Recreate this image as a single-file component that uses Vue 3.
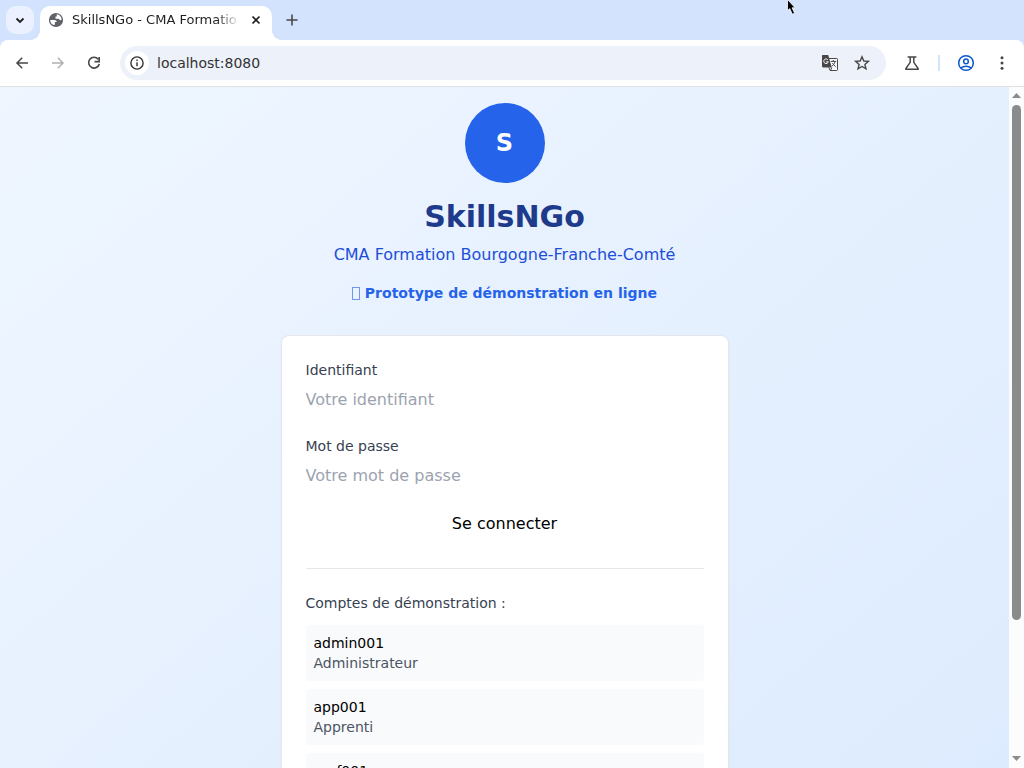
<script setup>
import { ref } from 'vue'

const username = ref('')
const password = ref('')
const accounts = [
  { id: 'admin001', role: 'Administrateur' },
  { id: 'app001', role: 'Apprenti' },
  { id: 'prof001', role: 'Formateur' },
]
</script>

<template>
  <div class="browser">
    <header class="tab-strip">
      <button class="tab-search" aria-label="Search tabs">
        <svg width="20" height="20" viewBox="0 0 20 20"><path d="M6.500 8.500 10 12l3.500-3.500" fill="none" stroke="#1f1f1f" stroke-width="1.800" /></svg>
      </button>
      <div class="tab">
        <svg class="favicon" width="16" height="16" viewBox="0 0 16 16">
          <circle cx="8" cy="8" r="7.100" fill="#5f6368" />
          <path d="M2.300 7.900h3.900c1.700 0 2.500.8 2.500 2.100H6.900v2.800c-.8.300-1.500.1-2.200-.3C2.900 11.400 2.100 9.700 2.300 7.900zM8.700 2.300C11.700 2.700 13.500 4.900 13.700 7.600c-.8.900-1.700.9-2.300 0-.4-.5-.7-.8-1.500-.8H7.500V4.600h1.400c0-.9-.3-1.500-.2-2.300z" fill="#fff" />
        </svg>
        <span class="tab-title">SkillsNGo - CMA Formatio</span>
        <button class="tab-close" aria-label="Close tab">
          <svg width="16" height="16" viewBox="0 0 16 16"><path d="m4.500 4.500 7 7m0-7-7 7" stroke="#1f1f1f" stroke-width="1.700" /></svg>
        </button>
      </div>
      <button class="new-tab" aria-label="New tab">
        <svg width="20" height="20" viewBox="0 0 20 20"><path d="M10 4.500v11M4.500 10h11" stroke="#474747" stroke-width="1.600" /></svg>
      </button>
      <svg class="cursor" width="12" height="18" viewBox="0 0 12 18"><path d="M.5-3v13.800l2.200-2.200 2.600 5.600 2.300-1-2.500-5.400h3L.5-.6z" fill="#000" stroke="#fff" stroke-width=".8" /></svg>
    </header>

    <nav class="toolbar">
      <button class="tool" aria-label="Back">
        <svg width="20" height="20" viewBox="0 0 20 20"><path d="M16 10H5.200M10.200 4.800 5 10l5.200 5.200" fill="none" stroke="#474747" stroke-width="1.500" /></svg>
      </button>
      <button class="tool" aria-label="Forward">
        <svg width="20" height="20" viewBox="0 0 20 20"><path d="M4 10h10.800M9.800 4.800 15 10l-5.200 5.200" fill="none" stroke="#b0b0b0" stroke-width="1.500" /></svg>
      </button>
      <button class="tool" aria-label="Reload">
        <svg width="20" height="20" viewBox="0 0 20 20"><path d="M14.200 6.200A5.400 5.400 0 1 0 15.300 11M15.200 4v4.600h-4.600" fill="none" stroke="#474747" stroke-width="1.600" /></svg>
      </button>
      <div class="omnibox">
        <button class="site-info" aria-label="View site information">
          <svg width="16" height="16" viewBox="0 0 16 16"><circle cx="8" cy="8" r="6.100" fill="none" stroke="#333" stroke-width="1.400" /><path d="M8 7.200v4M8 4.600V6" stroke="#333" stroke-width="1.400" /></svg>
        </button>
        <input class="url" type="text" value="localhost:8080" aria-label="Address" />
        <button class="inner-tool" aria-label="Translate this page">
          <svg width="18" height="18" viewBox="0 0 18 18">
            <path d="M7.500 4.500h8.200c.5 0 .8.300.8.800v10.400c0 .5-.3.800-.8.800H9.200l-1.400-3" fill="#f7f9fd" stroke="#474747" />
            <path d="M1.500 1h5.700l3.600 12.500H2.200c-.8 0-1.200-.5-1.200-1.200V1.700C1 1.200 1.200 1 1.500 1z" fill="#474747" />
            <path d="M6.900 5.800a2.300 2.300 0 1 0 .4 2H5.200" fill="none" stroke="#fff" />
            <path d="M9.800 7.400h5.400M12.300 6v1.400M14 7.400c-.4 2.100-1.500 3.600-3.200 4.800M11.300 9.200l3.300 3.500M9.500 16.500l1.300-3" fill="none" stroke="#474747" />
          </svg>
        </button>
        <button class="inner-tool" aria-label="Bookmark this tab">
          <svg width="18" height="18" viewBox="0 0 18 18"><path d="m9 2.800 1.800 4.200 4.600.4-3.500 3 1.100 4.500L9 12.500l-4 2.400 1.100-4.500-3.500-3 4.600-.4z" fill="none" stroke="#474747" stroke-width="1.400" /></svg>
        </button>
      </div>
      <button class="tool labs" aria-label="Experiments">
        <svg width="20" height="20" viewBox="0 0 20 20"><path d="M5.600 3.900h8.800M8.200 4v5.300L3.900 15.600v.7h12.200v-.7l-4.300-6.300V4" fill="none" stroke="#474747" stroke-width="1.500" /></svg>
      </button>
      <span class="separator"></span>
      <button class="tool profile" aria-label="Profile">
        <svg width="20" height="20" viewBox="0 0 20 20" fill="none" stroke="#0b57d0" stroke-width="1.500"><circle cx="10" cy="10" r="7.300" /><circle cx="10" cy="8.400" r="2.300" /><path d="M4.700 15c2.900-2.500 7.700-2.500 10.600 0" /></svg>
      </button>
      <button class="tool" aria-label="Menu">
        <svg width="20" height="20" viewBox="0 0 20 20" fill="#474747"><circle cx="10" cy="4.700" r="1.500" /><circle cx="10" cy="10" r="1.500" /><circle cx="10" cy="15.300" r="1.500" /></svg>
      </button>
    </nav>

    <div class="viewport">
      <main class="page">
        <div class="content">
          <div class="intro">
            <div class="logo">S</div>
            <h1>SkillsNGo</h1>
            <p class="subtitle">CMA Formation Bourgogne-Franche-Comté</p>
            <p class="prototype"><span class="glyph-box"></span> Prototype de démonstration en ligne</p>
          </div>
          <section class="card">
            <form @submit.prevent>
              <div class="field">
                <label for="username">Identifiant</label>
                <input id="username" v-model="username" type="text" placeholder="Votre identifiant" />
              </div>
              <div class="field">
                <label for="password">Mot de passe</label>
                <input id="password" v-model="password" type="password" placeholder="Votre mot de passe" />
              </div>
              <button class="submit" type="submit">Se connecter</button>
            </form>
            <div class="demo">
              <p class="demo-title">Comptes de démonstration :</p>
              <div class="accounts">
                <div v-for="account in accounts" :key="account.id" class="account">
                  <div>{{ account.id }}</div>
                  <div class="role">{{ account.role }}</div>
                </div>
              </div>
            </div>
          </section>
        </div>
      </main>
      <div class="scrollbar">
        <svg width="9" height="5" viewBox="0 0 9 5"><path d="M0 5 4.500 0 9 5z" fill="#8b8b8b" /></svg>
        <div class="track"><div class="thumb"></div></div>
        <svg width="9" height="5" viewBox="0 0 9 5"><path d="M0 0h9L4.500 5z" fill="#8b8b8b" /></svg>
      </div>
    </div>
  </div>
</template>

<style>
html, body { margin: 0; overflow: hidden; }
</style>

<style scoped>
* { box-sizing: border-box; }
.browser {
  display: flex;
  flex-direction: column;
  height: 100vh;
  overflow: hidden;
  background: #d3e3fd;
  font-family: "DejaVu Sans", sans-serif;
  font-size: 16px;
  line-height: 24px;
}
button, input { margin: 0; padding: 0; border: 0; background: transparent; color: inherit; font: inherit; outline: none; }
svg { display: block; flex: none; }
h1, p { margin: 0; }

.tab-strip { position: relative; display: flex; flex: none; height: 40px; padding-left: 6px; }
.tab-search { display: grid; place-items: center; width: 28px; height: 28px; margin: 6px 6px 0 0; border-radius: 10px; background: #ebf1fe; }
.tab { position: relative; display: flex; align-items: center; width: 232px; height: 34px; margin-top: 6px; padding: 0 8px 6px; border-radius: 10px 10px 0 0; background: #fff; }
.tab::before, .tab::after { content: ""; position: absolute; bottom: 0; width: 10px; height: 10px; }
.tab::before { right: 100%; background: radial-gradient(circle at 0 0, transparent 10px, #fff 10px); }
.tab::after { left: 100%; background: radial-gradient(circle at 100% 0, transparent 10px, #fff 10px); }
.tab-title { flex: 1; min-width: 0; margin: 0 8px; overflow: hidden; white-space: nowrap; font-size: 13px; line-height: 20px; color: #1f1f1f; mask-image: linear-gradient(to right, #000 calc(100% - 24px), transparent); }
.tab-close, .new-tab { display: grid; place-items: center; }
.new-tab { width: 28px; height: 28px; margin: 6px 0 0 6px; }
.cursor { position: absolute; right: 225px; top: 0; }

.toolbar { display: flex; flex: none; align-items: center; height: 47px; padding: 0 4px 1px; border-bottom: 1px solid #dfe1e5; border-radius: 8px 8px 0 0; background: #fff; }
.tool { display: grid; place-items: center; flex: none; width: 36px; height: 34px; }
.omnibox { display: flex; flex: 1; align-items: center; min-width: 0; height: 34px; margin: 0 8px; padding: 0 8px 0 5px; border-radius: 17px; background: #edf1fa; }
.site-info { display: grid; place-items: center; flex: none; width: 24px; height: 24px; border-radius: 12px; background: #fff; }
.url { flex: 1; min-width: 0; margin-left: 8px; font-size: 14px; line-height: 20px; color: #333; }
.inner-tool { display: grid; place-items: center; flex: none; width: 32px; height: 28px; }
.separator { flex: none; width: 2px; height: 16px; margin: 0 8px; background: #d3e3fd; }

.viewport { display: flex; flex: 1; min-height: 0; overflow: hidden; }
.page { flex: 1; min-width: 0; height: 860px; padding: 16px; background: linear-gradient(to bottom right, #eff6ff, #dbeafe); }
.content { max-width: 448px; margin: 0 auto; }
.intro { display: flex; flex-direction: column; align-items: center; margin-bottom: 32px; text-align: center; }
.logo { display: grid; place-items: center; width: 80px; height: 80px; margin-bottom: 16px; border-radius: 50%; background: #2563eb; color: #fff; font-size: 24px; line-height: 32px; font-weight: 700; }
h1 { color: #1e3a8a; font-size: 30px; line-height: 36px; font-weight: 700; }
.subtitle { margin-top: 8px; color: #1d4ed8; }
.prototype { margin-top: 16px; color: #2563eb; font-size: 14px; line-height: 20px; font-weight: 700; }
.glyph-box { display: inline-block; width: 8px; height: 13px; border: 1px solid #6f98f1; vertical-align: -2px; }
.card { padding: 24px; border: 1px solid #e5e7eb; border-radius: 8px; background: #fff; box-shadow: 0 1px 2px rgba(0, 0, 0, 0.05); }
.field { display: flex; flex-direction: column; gap: 8px; margin-bottom: 24px; }
label, .demo-title { color: #374151; font-size: 14px; line-height: 20px; }
.field input { width: 100%; height: 24px; }
.field input::placeholder { color: #9ca3af; opacity: 1; }
.submit { display: block; width: 100%; color: #000; }
.demo { margin-top: 32px; padding-top: 24px; border-top: 1px solid #e5e7eb; }
.accounts { display: grid; gap: 8px; margin-top: 12px; }
.account { padding: 8px; border-radius: 4px; background: #f9fafb; color: #000; font-size: 14px; line-height: 20px; }
.role { color: #4b5563; }

.scrollbar { display: flex; flex: none; flex-direction: column; align-items: center; gap: 7px; width: 15px; padding: 6px 0 7px; background: #fcfcfc; }
.track { flex: 1; min-height: 0; width: 9px; }
.thumb { height: 80%; border-radius: 5px; background: #8b8b8b; }
</style>
